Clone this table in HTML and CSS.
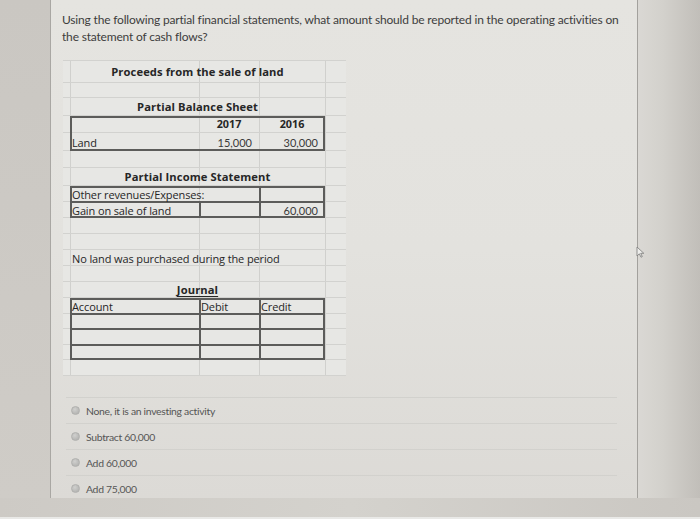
FILE: index.html
```html
<!DOCTYPE html>
<html lang="en">
<head>
<meta charset="utf-8">
<title>Question</title>
<link rel="stylesheet" href="styles.css">
</head>
<body>
<div class="screen">
  <div class="gutter-left"></div>
  <main class="card">
    <p class="question">Using the following partial financial statements, what amount should be reported in the operating activities on the statement of cash flows?</p>

    <div class="sheet">
      <div class="gl r1"></div><div class="gl r2"></div><div class="gl r3"></div><div class="gl r4"></div>
      <div class="gl r5"></div><div class="gl r6"></div><div class="gl r7"></div><div class="gl r8"></div>
      <div class="gl r9"></div><div class="gl r10"></div><div class="gl r11"></div><div class="gl r12"></div>
      <div class="gl r13"></div><div class="gl r14"></div><div class="gl r15"></div><div class="gl r16"></div>
      <div class="gl r17"></div><div class="gl r18"></div><div class="gl r19"></div>

      <div class="cell title r1 span-bd">Proceeds from the sale of land</div>

      <div class="cell title r3 span-bd">Partial Balance Sheet</div>
      <div class="box box-bs"></div>
      <div class="cell hd r4 col-b">2017</div>
      <div class="cell hd r4 col-c">2016</div>
      <div class="cell txt r5 col-a">Land</div>
      <div class="cell num r5 col-b">15,000</div>
      <div class="cell num r5 col-c">30,000</div>

      <div class="cell title r7 span-bd">Partial Income Statement</div>
      <div class="box box-is"></div>
      <div class="line-h r8 span-box"></div>
      <div class="line-v rows-is col-c"></div>
      <div class="line-v r9 col-b"></div>
      <div class="cell txt r8 span-ab">Other revenues/Expenses:</div>
      <div class="cell txt r9 col-a">Gain on sale of land</div>
      <div class="cell num r9 col-c">60,000</div>

      <div class="cell txt r12 span-ab">No land was purchased during the period</div>

      <div class="cell title journal r14 span-bd"><span>Journal</span></div>
      <div class="box box-j"></div>
      <div class="line-h r15 span-box"></div>
      <div class="line-h r16 span-box"></div>
      <div class="line-h r17 span-box"></div>
      <div class="line-v rows-j col-b"></div>
      <div class="line-v rows-j col-c"></div>
      <div class="cell txt r15 col-a">Account</div>
      <div class="cell txt r15 col-b">Debit</div>
      <div class="cell txt r15 col-c">Credit</div>
    </div>

    <ul class="options">
      <li class="option"><span class="radio"></span>None, it is an investing activity</li>
      <li class="option"><span class="radio"></span>Subtract 60,000</li>
      <li class="option"><span class="radio"></span>Add 60,000</li>
      <li class="option"><span class="radio"></span>Add 75,000</li>
    </ul>
  </main>
  <div class="gutter-right"></div>
  <svg class="cursor" width="9" height="12" viewBox="0 0 9 12" aria-hidden="true">
    <path d="M1 1 L1 10 L3.3 7.8 L5 11.2 L6.3 10.6 L4.7 7.3 L7.8 7.3 Z" fill="#eeeeec" stroke="#7a7a78" stroke-width="0.8" stroke-linejoin="round"/>
  </svg>
</div>
</body>
</html>
```

FILE: styles.css
```css
* { box-sizing: border-box; }

html, body {
  margin: 0;
  padding: 0;
  width: 700px;
  height: 519px;
  overflow: hidden;
}

body {
  background: #e9e9e7;
  font-family: "Lato", "Liberation Sans", sans-serif;
}

.screen {
  position: relative;
  display: flex;
  height: 517px;
  background: linear-gradient(to right, #cdcac5 0, #d4d2cd 50%, #cac7c2 100%);
}

.gutter-left {
  width: 50px;
  height: 498px;
  background: linear-gradient(to bottom, #cac7c2, #cfccc7);
}

.card {
  width: 588px;
  height: 498px;
  border-left: 1px solid #a9a7a3;
  border-right: 1px solid #a3a19d;
  background: linear-gradient(to bottom, #e5e4e0 0, #e3e2de 50%, #dcdad6 100%);
  padding: 11px 0 0 11px;
}

.gutter-right {
  flex: 1;
  height: 498px;
  background: linear-gradient(to right, #dad8d4 0, #d3d1cc 40%, #c1beb9 100%);
}

.question {
  margin: 0;
  width: 566px;
  font-size: 12px;
  line-height: 17px;
  color: #3d3d3d;
  letter-spacing: -0.18px;
}

/* ---------- spreadsheet image ---------- */
.sheet {
  margin: 15px 0 0 1px;
  width: 283px;
  display: grid;
  grid-template-columns: 7px 129px 60px 66px 21px;
  grid-template-rows: 22px 15px 18px 17px 18px 17px 18px 16px 16px 16px 16px 16px 16px 16px 16px 15px 16px 15px 16px;
  border-top: 1px solid #d2d2cf;
  background-color: #e7e7e4;
  background-image: linear-gradient(to right,
    transparent 7px, #d0d0cd 7px, #d0d0cd 8px, transparent 8px,
    transparent 136px, #d0d0cd 136px, #d0d0cd 137px, transparent 137px,
    transparent 196px, #d0d0cd 196px, #d0d0cd 197px, transparent 197px,
    transparent 262px, #d0d0cd 262px, #d0d0cd 263px, transparent 263px);
  font-family: "Open Sans", "DejaVu Sans", sans-serif;
  color: #262626;
}

.gl {
  grid-column: 1 / -1;
  border-bottom: 1px solid #d2d2cf;
}

.r1 { grid-row: 1; }
.r2 { grid-row: 2; }
.r3 { grid-row: 3; }
.r4 { grid-row: 4; }
.r5 { grid-row: 5; }
.r6 { grid-row: 6; }
.r7 { grid-row: 7; }
.r8 { grid-row: 8; }
.r9 { grid-row: 9; }
.r10 { grid-row: 10; }
.r11 { grid-row: 11; }
.r12 { grid-row: 12; }
.r13 { grid-row: 13; }
.r14 { grid-row: 14; }
.r15 { grid-row: 15; }
.r16 { grid-row: 16; }
.r17 { grid-row: 17; }
.r18 { grid-row: 18; }
.r19 { grid-row: 19; }

.col-a { grid-column: 2; }
.col-b { grid-column: 3; }
.col-c { grid-column: 4; }
.span-ab { grid-column: 2 / 5; }
.span-bd { grid-column: 2 / 5; }
.span-box { grid-column: 2 / 5; }
.rows-is { grid-row: 8 / 10; }
.rows-j { grid-row: 15 / 19; }

.cell {
  display: flex;
  align-items: center;
  white-space: nowrap;
  line-height: 1;
  overflow: visible;
  z-index: 1;
}

.title {
  justify-content: center;
  font-weight: 700;
  font-size: 11.2px;
  letter-spacing: 0.1px;
}

.journal span {
  text-decoration: underline;
  text-underline-offset: 2px;
}

.hd {
  justify-content: center;
  font-weight: 700;
  font-size: 10.8px;
}

.txt {
  padding-left: 2px;
  font-size: 11px;
  letter-spacing: -0.12px;
}

.num {
  justify-content: flex-end;
  padding-right: 7px;
  font-family: "Lato", "Liberation Sans", sans-serif;
  font-size: 11px;
  color: #3a3a3a;
}

.box {
  border: 2px solid #5c5c5a;
}
.box-bs { grid-column: 2 / 5; grid-row: 4 / 6; }
.box-is { grid-column: 2 / 5; grid-row: 8 / 10; }
.box-j  { grid-column: 2 / 5; grid-row: 15 / 19; }

.line-h { border-bottom: 2px solid #5c5c5a; margin-bottom: -1px; }
.line-v { border-left: 2px solid #5c5c5a; }

/* ---------- answer options ---------- */
.options {
  list-style: none;
  margin: 21px 0 0 4px;
  padding: 0;
  width: 551px;
}

.option {
  display: flex;
  align-items: center;
  height: 26px;
  padding: 0 0 0 5px;
  border-top: 1px solid #d2d1cd;
  font-size: 10.4px;
  color: #555;
  letter-spacing: -0.3px;
}

.radio {
  width: 9px;
  height: 9px;
  margin-right: 6px;
  border-radius: 50%;
  border: 1px solid #b0b0ae;
  background: radial-gradient(circle at 40% 35%, #d0d0ce 0, #b7b7b5 70%);
}

.cursor {
  position: absolute;
  left: 636px;
  top: 246px;
}
```
